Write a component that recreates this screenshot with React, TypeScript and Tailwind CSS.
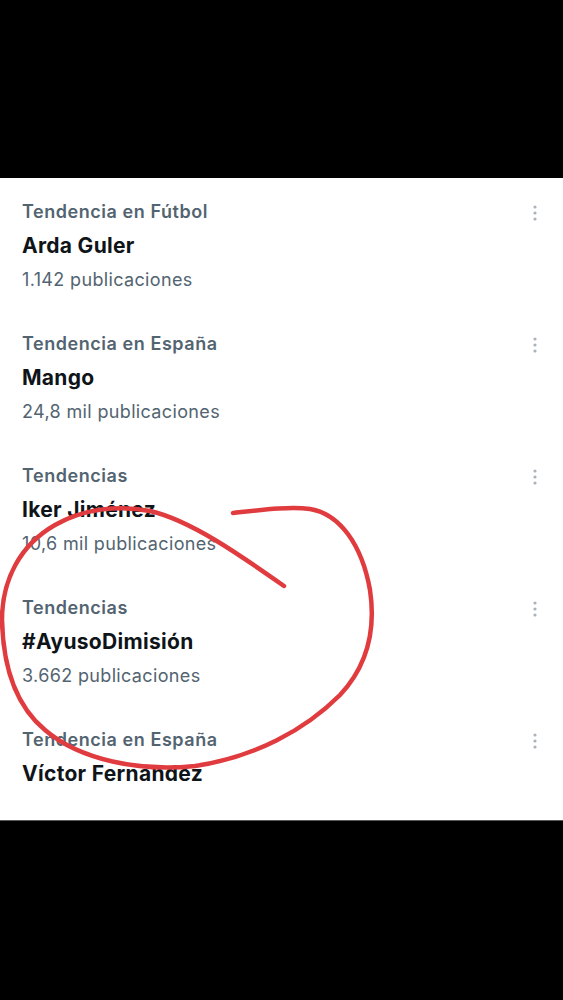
import React from "react";

type Trend = {
  category: string;
  name: string;
  count?: string;
};

const trends: Trend[] = [
  { category: "Tendencia en Fútbol", name: "Arda Guler", count: "1.142 publicaciones" },
  { category: "Tendencia en España", name: "Mango", count: "24,8 mil publicaciones" },
  { category: "Tendencias", name: "Iker Jiménez", count: "10,6 mil publicaciones" },
  { category: "Tendencias", name: "#AyusoDimisión", count: "3.662 publicaciones" },
  { category: "Tendencia en España", name: "Víctor Fernández" },
];

function MoreDots() {
  return (
    <svg width="6" height="16" viewBox="0 0 6 16" className="mt-[10px]">
      <circle cx="3" cy="2" r="1.6" fill="#aab3bb" />
      <circle cx="3" cy="8" r="1.6" fill="#aab3bb" />
      <circle cx="3" cy="14" r="1.6" fill="#aab3bb" />
    </svg>
  );
}

function TrendRow({ trend }: { trend: Trend }) {
  return (
    <div className="flex h-[132px] items-start justify-between pl-[22px] pr-[25px] pt-[17px]">
      <div className="flex flex-col">
        <span className="text-[18px] font-semibold leading-[34px] tracking-[0.55px] text-[#536471]">{trend.category}</span>
        <span className="text-[21px] font-bold leading-[34px] tracking-[0.3px] text-[#0f1419]">{trend.name}</span>
        {trend.count ? (
          <span className="text-[18px] leading-[34px] tracking-[0.35px] text-[#536471]">{trend.count}</span>
        ) : null}
      </div>
      <MoreDots />
    </div>
  );
}

export default function App() {
  return (
    <div className="relative h-[1000px] w-[563px] overflow-hidden bg-black font-['Inter',sans-serif]">
      <div className="h-[178px]" />
      <div className="h-[643px] overflow-hidden border-b border-[#5a5a5a] bg-white">
        {trends.map((trend, i) => (
          <TrendRow key={i} trend={trend} />
        ))}
      </div>

      {/* hand-drawn red circle on top of the screenshot */}
      <svg
        className="pointer-events-none absolute left-0 top-0"
        width="563"
        height="1000"
        viewBox="0 0 563 1000"
      >
        <path
          d="M233 513 C 260 510, 290 506, 310 509 C 340 514, 362 545, 370 590 C 376 630, 368 665, 340 695 C 305 730, 255 757, 195 766 C 140 772, 80 760, 45 730 C 15 705, 3 665, 2 620 C 2 580, 20 545, 55 525 C 85 508, 120 505, 150 511 C 190 520, 240 555, 284 586"
          fill="none"
          stroke="#e03c3f"
          strokeWidth="4.5"
          strokeLinecap="round"
          strokeLinejoin="round"
        />
      </svg>
    </div>
  );
}
